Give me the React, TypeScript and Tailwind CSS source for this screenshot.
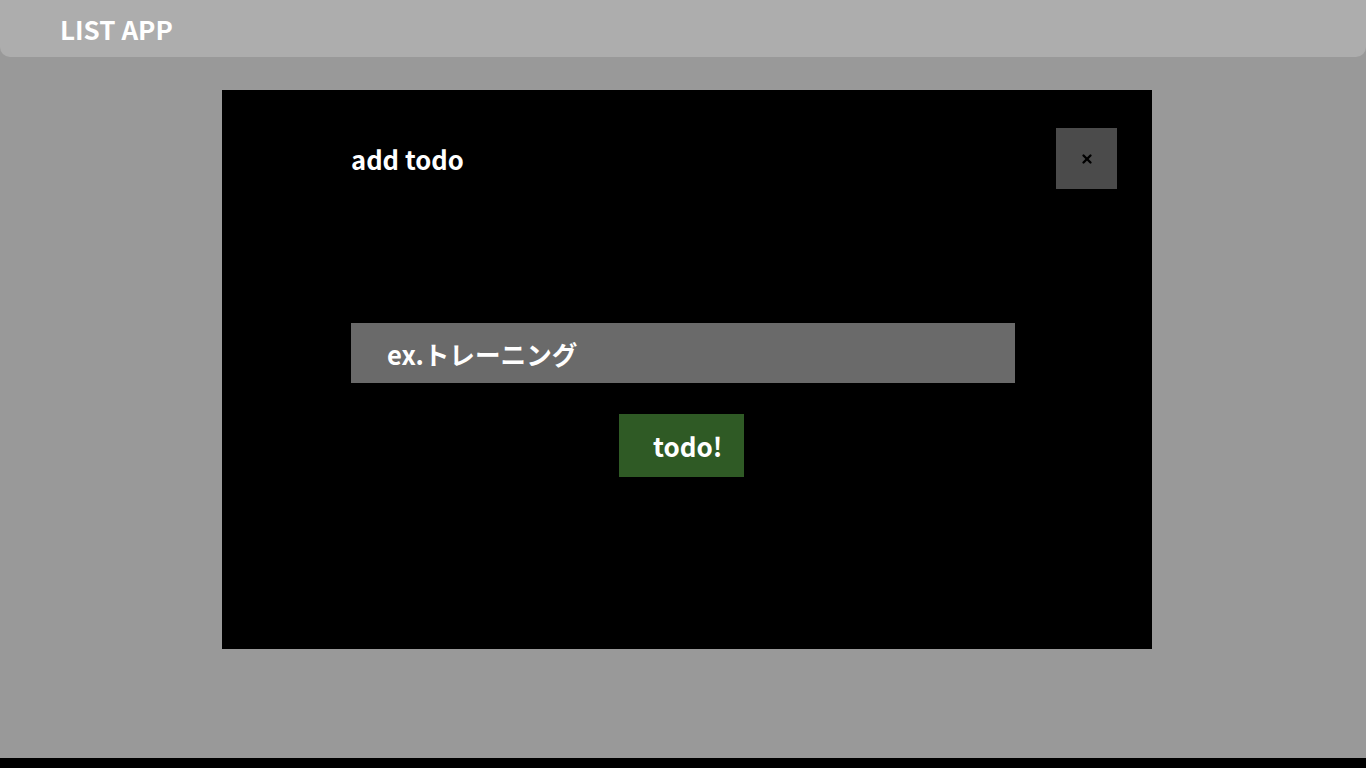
import { X } from "lucide-react";

const font = { fontFamily: '"Noto Sans CJK JP", "Noto Sans", sans-serif' };

export default function App() {
  return (
    <div className="min-h-[768px] bg-black" style={font}>
      <div className="h-[758px] bg-[#999999]">
        {/* ヘッダー */}
        <header className="h-[57px] rounded-b-[10px] bg-[#adadad] pl-[60px] flex items-center">
          <h1 className="text-[26px] font-bold text-white leading-none">LIST APP</h1>
        </header>

        {/* モーダル */}
        <div className="ml-[222px] mt-[33px] w-[930px] h-[559px] bg-black pl-[129px] pr-[35px] pt-[38px]">
          <div className="flex items-center justify-between">
            <h2 className="text-[25.6px] font-bold text-white leading-none">add todo</h2>
            <button className="w-[61px] h-[61px] bg-[#4b4b4b] flex items-center justify-center">
              <X size={14} strokeWidth={4} className="text-black" />
            </button>
          </div>

          <div className="mt-[134px] w-[664px] flex flex-col">
            <input
              className="w-full h-[60px] bg-[#6a6a6a] pl-[36px] text-[25.6px] font-bold text-white placeholder:text-white outline-none"
              placeholder="ex.トレーニング"
            />
            <button className="mt-[31px] ml-[268px] h-[63px] w-[125px] bg-[#2f5a25] pl-[34px] text-left text-[26px] font-bold text-white">
              todo!
            </button>
          </div>
        </div>
      </div>
    </div>
  );
}
